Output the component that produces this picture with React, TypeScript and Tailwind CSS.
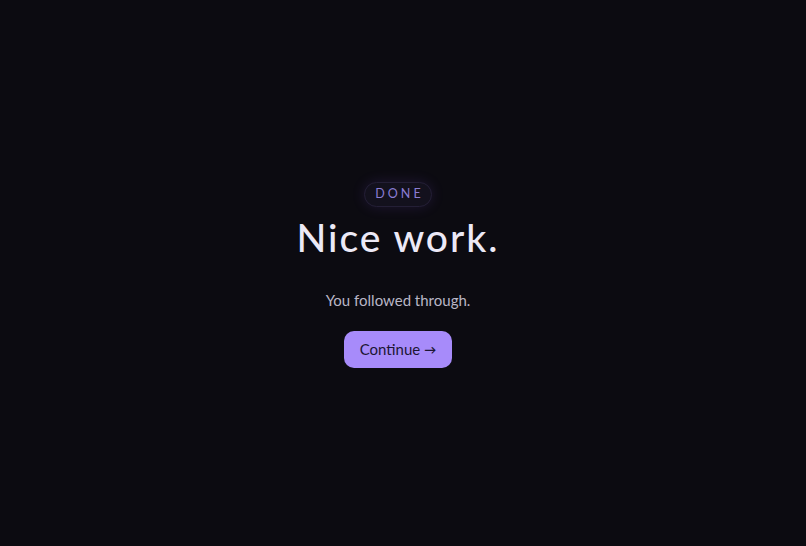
import React from 'react';

const App: React.FC = () => {
  return (
    <div
      className="min-h-screen w-full bg-[#0c0b11] flex flex-col items-center justify-center pr-[10px] pt-[4px]"
      style={{ fontFamily: 'Lato, "Noto Sans", sans-serif' }}
    >
      <span className="h-[25px] pl-[10px] pr-[7px] flex items-center rounded-full border border-[#241f36] bg-[#13111d] text-[12.5px] tracking-[0.24em] text-[#8b7dd3] shadow-[0_0_14px_rgba(139,92,246,0.14)]">
        DONE
      </span>
      <h1 className="mt-[6px] text-[39px] leading-[48px] tracking-[0.05em] font-medium text-[#ece9f6]">
        Nice work.
      </h1>
      <p className="mt-[28px] text-[15px] leading-[22px] text-[#b9b6c6]">You followed through.</p>
      <button className="mt-[20px] w-[108px] h-[37px] rounded-[10px] bg-[#a78bfa] text-[15px] text-[#1c1633] flex items-center justify-center gap-[4px]">
        <span>Continue</span>
        <span className="text-[12px] font-bold">→</span>
      </button>
    </div>
  );
};

export default App;
